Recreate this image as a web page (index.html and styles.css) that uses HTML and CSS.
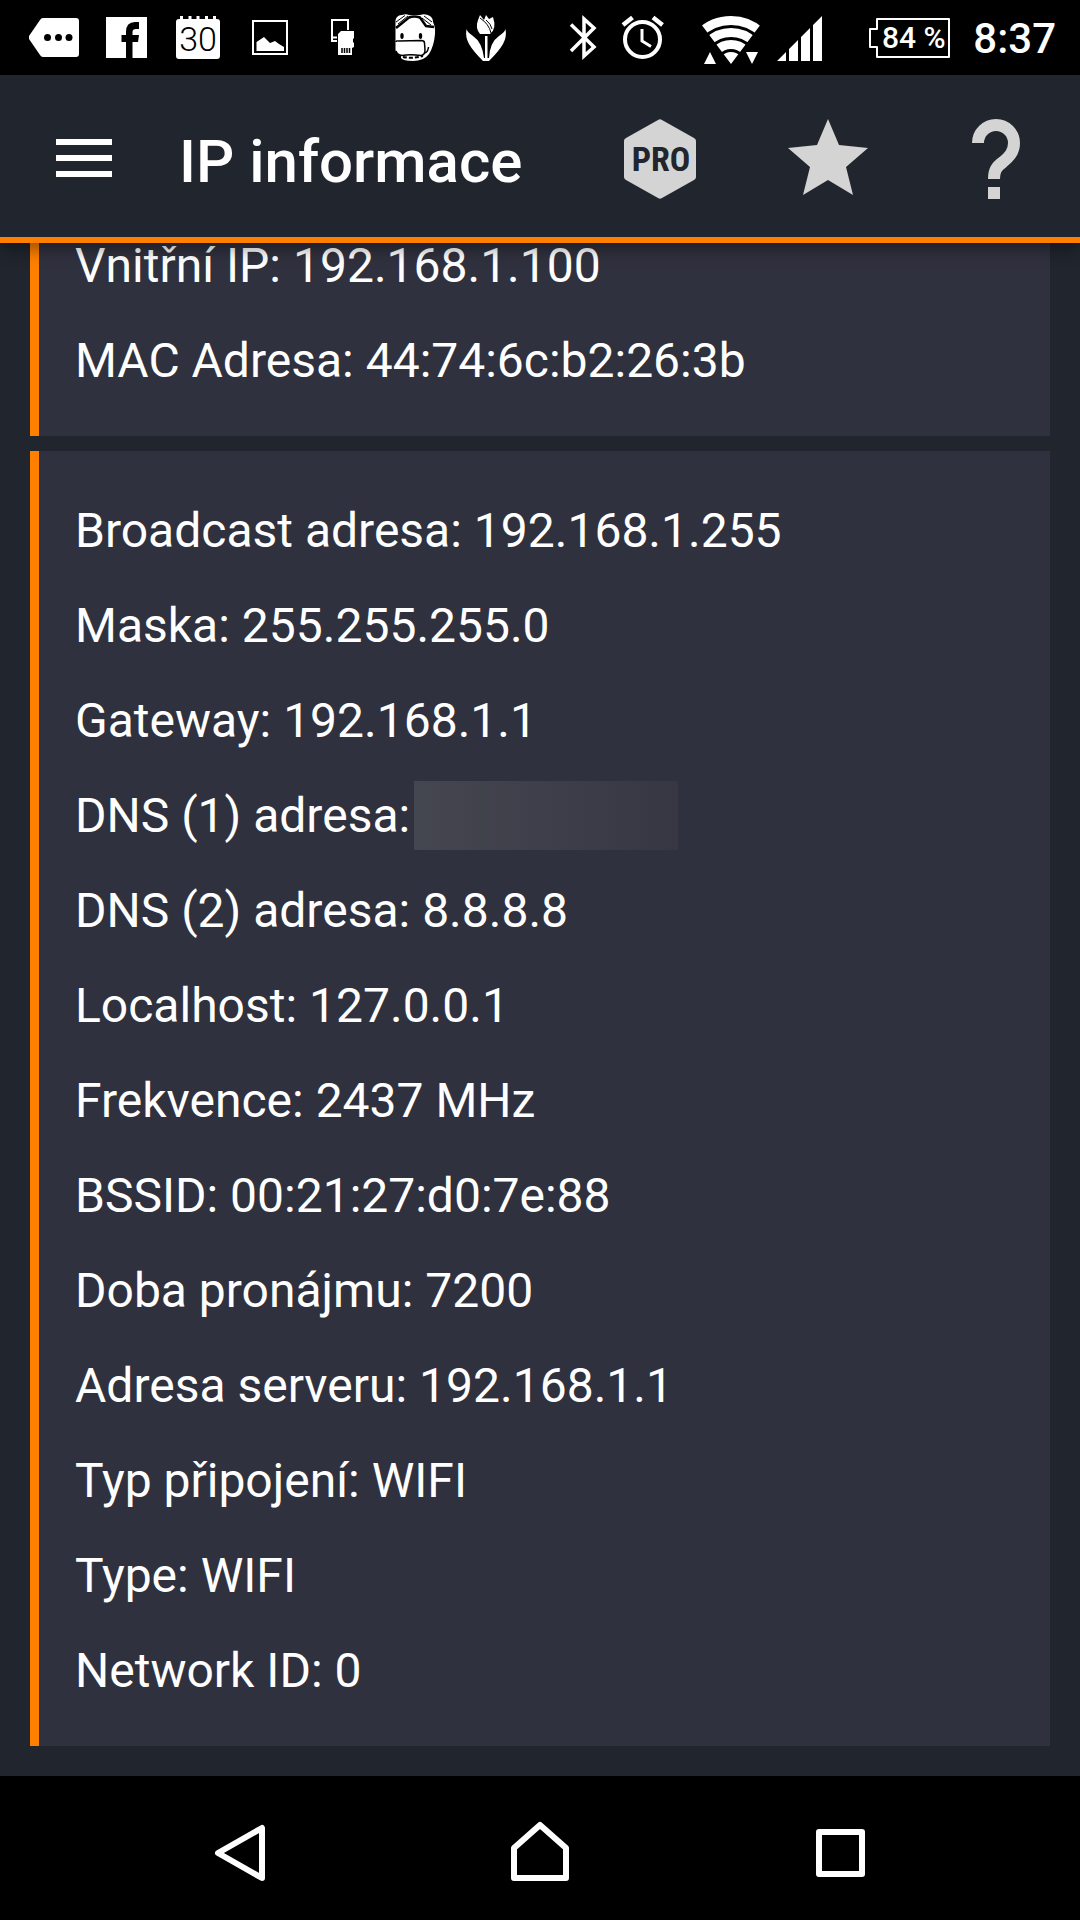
FILE: index.html
```html
<!DOCTYPE html>
<html lang="cs">
<head>
<meta charset="utf-8">
<meta name="viewport" content="width=device-width, initial-scale=1">
<title>IP informace</title>
<link rel="stylesheet" href="styles.css">
</head>
<body>
<div class="app">
  <div class="status">
    <div class="status-group">
      <svg class="notice" viewBox="18 0 72 75" aria-hidden="true"><path fill="#fff" d="M43 18H76Q79 18 79 21V54Q79 57 76 57H43Q41 57 40 55L29 39V36L40 20Q41 18 43 18Z"/><g fill="#000"><circle cx="47.500" cy="37.500" r="3.500"/><circle cx="58.500" cy="37.500" r="3.500"/><circle cx="69" cy="37.500" r="3.500"/></g></svg>
      <svg class="notice" viewBox="90 0 72 75" aria-hidden="true"><path fill="#fff" d="M106 17H147V58H106Z"/><path fill="#000" d="M126 58V42H121.500V35H126V32Q126 22 135 22H139V29H136Q132.500 29 132.500 32V35H139L138 42H132.500V58Z"/></svg>
      <svg class="notice" viewBox="162 0 72 75" aria-hidden="true"><rect x="176" y="19" width="44" height="40" rx="3" fill="#fff"/><path stroke="#fff" stroke-width="3" d="M181.500 16V20M190 16V20M198 16V20M206.500 16V20M214.500 16V20"/><text class="cal-day" x="198" y="51" text-anchor="middle">30</text></svg>
      <svg class="notice" viewBox="234 0 72 75" aria-hidden="true"><rect x="253" y="21" width="34" height="33" fill="none" stroke="#fff" stroke-width="2"/><path fill="#fff" d="M256.500 51V42L264 37L270 43L275 41L279 44L284 47V51Z"/></svg>
      <svg class="notice" viewBox="306 0 72 75" aria-hidden="true"><path fill="none" stroke="#fff" stroke-width="2" d="M348 30V20H332V41H337M333 37.500H337"/><path fill="#fff" d="M341 31H354V38L353 39V42L354 43V47L352 48V55H338V34Z"/><path stroke="#000" stroke-width="1.500" d="M342 48V53M344.500 48V53M347 48V53M349.500 48V53"/></svg>
      <svg class="notice" viewBox="378 0 72 75" aria-hidden="true"><path fill="#fff" d="M402 15Q406 13.500 409 15H420Q425 13 430 16Q433 18 433 22Q435.500 27 435 34Q434 46 429 54Q424 61 413 61Q403 61 401 58V56Q396 54 395.500 50V20Q397 15 402 15Z"/><g fill="none" stroke="#000"><path stroke-width="2.500" d="M396 28L409 17.500Q414 15.500 420 17.500L426 26L434 27"/><path stroke-width="1" d="M396 22L405 15.500M398 24L408 16M424 16L432 22M422 18L431 25"/><path stroke-width="1.500" d="M396 42Q396 40.500 399 41L421 40.500Q424.500 40.500 424.500 43L425 50Q425 55 421 55.500Q410 54 402 55.500Q397 55 396 51M425 53Q428 52 428.500 47"/><path stroke-width="2" stroke-dasharray="4 2" d="M403 57Q412 59 423 56"/></g><g fill="#000"><ellipse cx="402" cy="36" rx="1.700" ry="3"/><ellipse cx="420.500" cy="36" rx="1.700" ry="3"/></g></svg>
      <svg class="notice" viewBox="450 0 72 75" aria-hidden="true"><path fill="#fff" d="M480 15L484 20L486 15L489 19L493 17Q497 29 490 34H480Q475 28 478 20ZM485 36H487.500V58H485ZM466.500 29Q467 32 473 36Q482 42 484 58L489 58Q490 42 499 36Q505 32 505.500 29Q507 37 503 44Q499 51 489 61H483Q473 51 469 44Q465 37 466.500 29Z"/><path fill="none" stroke="#000" stroke-width="1" d="M480 18Q489 24 491 33M486 20Q491 24 492 29"/><path fill="#000" d="M480 36H484V54ZM492 36H488.500V54Z"/></svg>
    </div>
    <div class="status-group">
      <svg class="indicator" viewBox="553 0 60 75" aria-hidden="true"><path fill="none" stroke="#fff" stroke-width="3.500" d="M571 24.500L594 47L584 56V19L594 28L571 51"/></svg>
      <svg class="indicator" viewBox="613 0 60 75" aria-hidden="true"><circle cx="642.500" cy="39.500" r="17.500" fill="none" stroke="#fff" stroke-width="4"/><path fill="none" stroke="#fff" stroke-width="3" d="M642 29V41L651 46.500"/><path stroke="#fff" stroke-width="4.500" d="M623 25L632.500 17.500M653 17.500L662.500 25"/></svg>
      <svg class="wifi" viewBox="673 0 92 75" aria-hidden="true"><clipPath id="fan"><path d="M731 64L695 16V0H767V16Z"/></clipPath><g clip-path="url(#fan)"><circle cx="731" cy="65" r="13" fill="#fff"/><g fill="none" stroke="#fff" stroke-width="9"><circle cx="731" cy="65" r="20.500"/><circle cx="731" cy="65" r="32.500"/><circle cx="731" cy="65" r="44.500"/></g></g><path fill="#fff" d="M710 52L716 64H704ZM746 52H758L752 64Z"/></svg>
      <svg class="signal" viewBox="765 0 80 75" aria-hidden="true"><path fill="#fff" d="M777 61L786 52V61ZM789 49L798 40V61H789ZM801 37L810 28V61H801ZM813 25L822 16V61H813Z"/></svg>
      <div class="battery"><svg class="battery-shape" viewBox="869 17 81 40" aria-hidden="true"><path fill="none" stroke="#fff" stroke-width="2" stroke-linejoin="round" d="M877 18H949V56H877V46H870V28H877Z"/></svg><span class="battery-level">84 %</span></div>
      <time class="clock">8:37</time>
    </div>
  </div>

  <header class="toolbar">
    <button class="tool" type="button" aria-label="Menu"><svg class="tool-icon" viewBox="0 75 168 168"><path fill="#fff" d="M56 139H112V145H56ZM56 155H112V161H56ZM56 171H112V177H56Z"/></svg></button>
    <h1 class="title">IP informace</h1>
    <button class="tool" type="button" aria-label="PRO"><svg class="tool-icon" viewBox="576 75 168 168"><path fill="#d4d4d4" d="M658 120Q660 118.500 662 120L694 138Q696 139 696 141V177Q696 179 694 180L662 198Q660 199.500 658 198L626 180Q624 179 624 177V141Q624 139 626 138Z"/><text class="pro" x="661" y="171" text-anchor="middle">PRO</text></svg></button>
    <button class="tool" type="button" aria-label="Oblíbené"><svg class="tool-icon" viewBox="744 75 168 168"><path fill="#d4d4d4" d="M828 119L839 145L868 148L846 167L853 195L828 180L803 195L810 167L788 148L817 145Z"/></svg></button>
    <button class="tool" type="button" aria-label="Nápověda"><svg class="tool-icon" viewBox="912 75 168 168"><path fill="none" stroke="#d4d4d4" stroke-width="12" d="M978 143A18 18 0 0 1 1014 143C1014 152 1009 157 1003 162C996 167 994 171 994 179"/><path fill="#d4d4d4" d="M988 187H1000V199H988Z"/></svg></button>
  </header>

  <main class="content">
    <dl class="card">
      <div class="row"><dt>Vnitřní IP:</dt><dd>192.168.1.100</dd></div>
      <div class="row"><dt>MAC Adresa:</dt><dd>44:74:6c:b2:26:3b</dd></div>
    </dl>
    <dl class="card">
      <div class="row"><dt>Broadcast adresa:</dt><dd>192.168.1.255</dd></div>
      <div class="row"><dt>Maska:</dt><dd>255.255.255.0</dd></div>
      <div class="row"><dt>Gateway:</dt><dd>192.168.1.1</dd></div>
      <div class="row row-masked"><dt>DNS (1) adresa:</dt><dd class="mask"></dd></div>
      <div class="row"><dt>DNS (2) adresa:</dt><dd>8.8.8.8</dd></div>
      <div class="row"><dt>Localhost:</dt><dd>127.0.0.1</dd></div>
      <div class="row"><dt>Frekvence:</dt><dd>2437 MHz</dd></div>
      <div class="row"><dt>BSSID:</dt><dd>00:21:27:d0:7e:88</dd></div>
      <div class="row"><dt>Doba pronájmu:</dt><dd>7200</dd></div>
      <div class="row"><dt>Adresa serveru:</dt><dd>192.168.1.1</dd></div>
      <div class="row"><dt>Typ připojení:</dt><dd>WIFI</dd></div>
      <div class="row"><dt>Type:</dt><dd>WIFI</dd></div>
      <div class="row"><dt>Network ID:</dt><dd>0</dd></div>
    </dl>
  </main>

  <nav class="navbar" aria-label="Systém">
    <button class="nav-button" type="button" aria-label="Zpět"><svg class="nav-icon" viewBox="204 1812 72 72"><path d="M218 1853L262 1828V1878Z"/></svg></button>
    <button class="nav-button" type="button" aria-label="Domů"><svg class="nav-icon" viewBox="504 1812 72 72"><path d="M540 1825L566 1848V1878H514V1848Z"/></svg></button>
    <button class="nav-button" type="button" aria-label="Přehled"><svg class="nav-icon" viewBox="804 1812 72 72"><path d="M819 1832H862V1874H819Z"/></svg></button>
  </nav>
</div>
</body>
</html>
```

FILE: styles.css
```css
* {
  box-sizing: border-box;
}

body {
  margin: 0;
  background: #21252d;
  color: #fff;
  font-family: Roboto, "Noto Sans", sans-serif;
}

button {
  padding: 0;
  border: 0;
  background: none;
  color: inherit;
  font: inherit;
}

svg {
  display: block;
}

.app {
  display: flex;
  flex-direction: column;
  height: 100vh;
}

/* System status bar */
.status {
  display: flex;
  flex: none;
  justify-content: space-between;
  height: 75px;
  padding: 0 24px 0 18px;
  background: #000;
}

.status-group {
  display: flex;
  align-items: center;
}

.notice {
  width: 72px;
  height: 75px;
}

.indicator {
  width: 60px;
  height: 75px;
}

.wifi {
  width: 92px;
  height: 75px;
}

.signal {
  width: 80px;
  height: 75px;
}

.cal-day {
  fill: #000;
  font-size: 34px;
  font-weight: 300;
}

.battery {
  display: grid;
  margin: 0 23px 0 24px;
}

.battery-shape,
.battery-level {
  grid-area: 1 / 1;
}

.battery-shape {
  width: 81px;
  height: 40px;
}

.battery-level {
  padding-left: 8px;
  font-size: 30px;
  font-weight: 500;
  line-height: 40px;
  text-align: center;
}

.clock {
  padding-top: 3px;
  font-size: 42px;
  font-weight: 500;
  line-height: 72px;
}

/* App toolbar */
.toolbar {
  position: relative;
  z-index: 1;
  display: flex;
  flex: none;
  align-items: center;
  background: #21252d;
  box-shadow: inset 0 -6px #ff8000, 0 6px 16px rgba(0, 0, 0, 0.4);
}

.tool,
.tool-icon {
  width: 168px;
  height: 168px;
}

.title {
  flex: 1;
  margin: 0;
  padding: 6px 0 0 11px;
  font-size: 60px;
  font-weight: 500;
  line-height: 72px;
  white-space: nowrap;
}

.pro {
  fill: #21252d;
  font-family: "Roboto Condensed", "Liberation Sans Narrow", "Liberation Sans", sans-serif;
  font-size: 34px;
  font-weight: 700;
}

/* Scrolled to the end: the first card runs under the toolbar */
.content {
  display: flex;
  flex: 1;
  flex-direction: column;
  justify-content: flex-end;
  gap: 15px;
  min-height: 0;
  padding: 0 30px 30px;
  overflow: hidden;
}

.card {
  flex: none;
  margin: 0;
  padding: 32px 36px 28px;
  border-left: 9px solid #ff8000;
  background: #30313e;
  font-size: 48px;
  line-height: 95px;
}

.row {
  display: flex;
  align-items: center;
  gap: 12px;
}

.row dd {
  margin: 0;
}

.row-masked {
  gap: 4px;
}

.mask {
  width: 264px;
  height: 69px;
  background: linear-gradient(90deg, #444650, #3d3e49 55%, #363742);
}

/* System navigation bar */
.navbar {
  display: flex;
  flex: none;
  padding: 0 90px;
  background: #000;
}

.nav-button {
  display: flex;
  flex: 1;
  align-items: center;
  justify-content: center;
  height: 144px;
}

.nav-icon {
  width: 72px;
  height: 72px;
  fill: none;
  stroke: #fff;
  stroke-width: 6px;
  stroke-linejoin: round;
}
```
